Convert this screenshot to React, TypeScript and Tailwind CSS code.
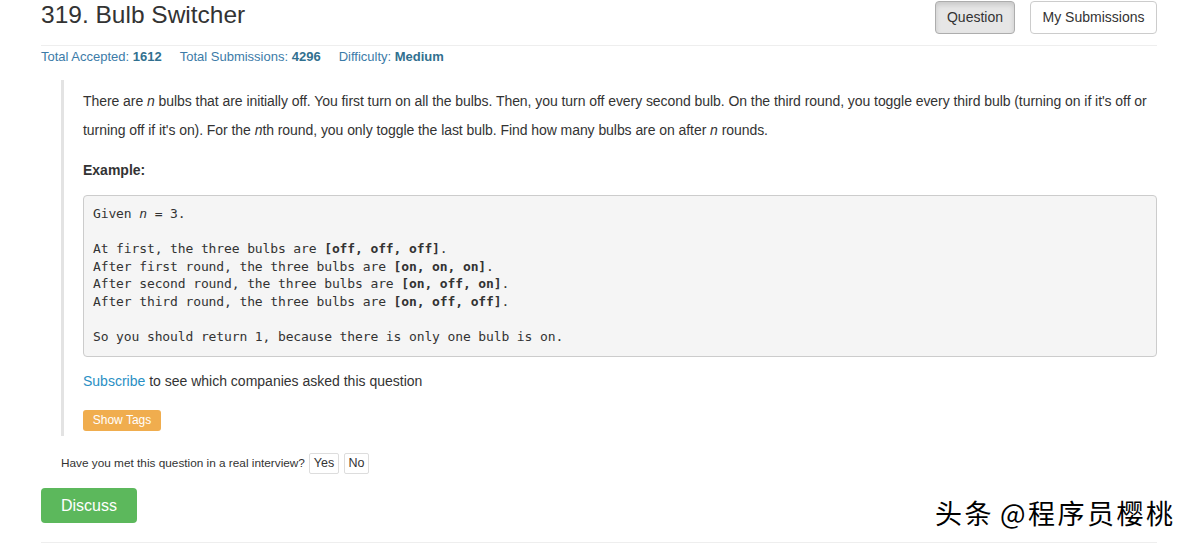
export default function App() {
  const sans = "font-['Liberation_Sans',Arial,sans-serif]";
  return (
    <div className={`relative w-[1200px] h-[545px] overflow-hidden bg-white text-[#333] ${sans}`}>
      <div className="ml-[41px] w-[1116px]">
        <div className="flex items-start justify-between h-[46px] border-b border-[#eee]">
          <h1 className="text-[24.5px] leading-[30px] font-normal text-[#333]">319. Bulb Switcher</h1>
          <div className="flex gap-[15px] mt-[1px]">
            <button className="h-[33px] w-[80px] whitespace-nowrap rounded-[4px] border border-[#adadad] bg-[#e6e6e6] shadow-[inset_0_3px_5px_rgba(0,0,0,0.125)] text-[14px]">
              Question
            </button>
            <button className="h-[33px] w-[127px] whitespace-nowrap rounded-[4px] border border-[#ccc] bg-white text-[14px]">
              My Submissions
            </button>
          </div>
        </div>
        <div className="mt-[2px] text-[13px] leading-[18px] text-[#3c7ba8] flex gap-[18px]">
          <span>
            Total Accepted: <b className="text-[#31708f]">1612</b>
          </span>
          <span>
            Total Submissions: <b className="text-[#31708f]">4296</b>
          </span>
          <span>
            Difficulty: <b className="text-[#31708f]">Medium</b>
          </span>
        </div>

        <div className="ml-[20px] mt-[14px] border-l-[3px] border-[#e3e3e3] pl-[19px] pt-[7px] h-[356px]">
          <p className="text-[14px] leading-[29px] tracking-[-0.06px] text-[#333] whitespace-nowrap">
            There are <i>n</i> bulbs that are initially off. You first turn on all the bulbs. Then, you turn off every second
            bulb. On the third round, you toggle every third bulb (turning on if it's off or
            <br />
            turning off if it's on). For the <i>n</i>th round, you only toggle the last bulb. Find how many bulbs are on
            after <i>n</i> rounds.
          </p>
          <p className="mt-[15px] text-[14px] leading-[20px] font-bold">Example:</p>
          <pre className="mt-[15px] w-[1074px] rounded-[4px] border border-[#ccc] bg-[#f5f5f5] px-[9px] pt-[9px] pb-[11px] text-[13px] leading-[17.5px] text-[#333] font-['DejaVu_Sans_Mono',Menlo,monospace] tracking-[-0.12px]">
            {"Given "}
            <i>n</i>
            {" = 3.\n\nAt first, the three bulbs are "}
            <b>[off, off, off]</b>
            {".\nAfter first round, the three bulbs are "}
            <b>[on, on, on]</b>
            {".\nAfter second round, the three bulbs are "}
            <b>[on, off, on]</b>
            {".\nAfter third round, the three bulbs are "}
            <b>[on, off, off]</b>
            {".\n\nSo you should return 1, because there is only one bulb is on."}
          </pre>
          <p className="mt-[14px] text-[14px] leading-[20px]">
            <span className="text-[#2a8fc4]">Subscribe</span> to see which companies asked this question
          </p>
          <button className="mt-[19px] h-[21px] w-[78px] rounded-[3px] bg-[#f0ad4e] text-white text-[12px] leading-[21px]">
            Show Tags
          </button>
        </div>

        <div className="mt-[17px] ml-[20px] flex items-center gap-[4px] text-[11.8px]">
          <span>Have you met this question in a real interview?</span>
          <button className="h-[21px] w-[30px] border border-[#ddd] rounded-[2px] bg-white text-[12.5px]">Yes</button>
          <button className="h-[21px] w-[25px] ml-[1px] border border-[#ddd] rounded-[2px] bg-white text-[12.5px]">No</button>
        </div>

        <button className="mt-[14px] h-[35px] w-[96px] rounded-[4px] bg-[#5cb85c] text-white text-[16px]">Discuss</button>
        <div className="mt-[19px] border-b border-[#eee]" />
      </div>

      <div className="absolute left-[935px] top-[496px] flex text-[27px] leading-[34px] tracking-[2.5px] text-black font-['Noto_Sans_CJK_SC',sans-serif] [text-shadow:1px_1px_0_#fff,-1px_-1px_0_#fff]">
        <span>头条</span>
        <span className="ml-[6px]">@程序员樱桃</span>
      </div>
    </div>
  );
}
